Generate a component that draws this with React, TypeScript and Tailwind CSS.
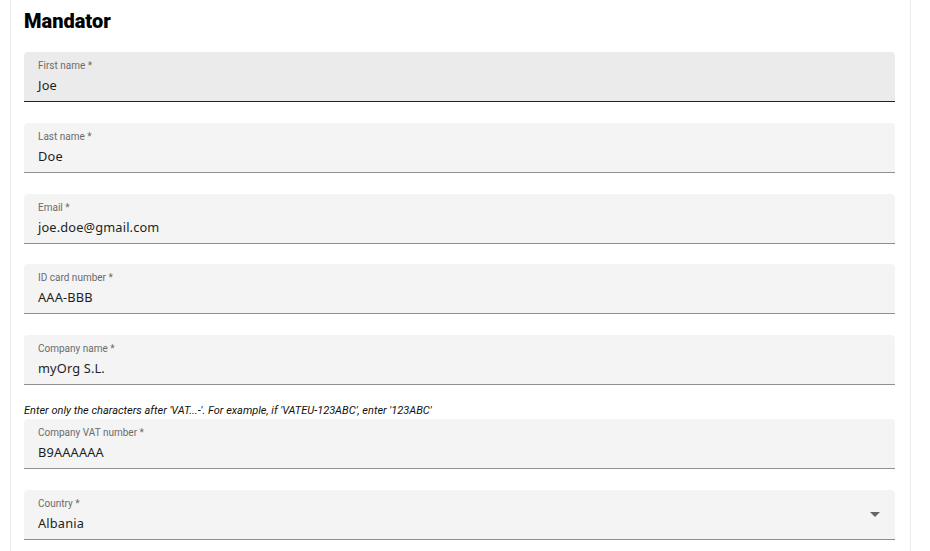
import React from "react";

type F = { label: string; value: string; active?: boolean; select?: boolean };

function Field({ label, value, active, select }: F) {
  return (
    <div
      className={`relative h-[50px] rounded-t-[4px] border-b ${
        active ? "bg-[#ebebeb] border-[#222]" : "bg-[#f4f4f4] border-[#8f8f8f]"
      }`}
    >
      <div className="pl-[14px] pt-[8px] leading-[12px] text-[10px] text-[#6b6b6b] [font-family:Roboto,sans-serif]">
        {label} *
      </div>
      <div className="pl-[14px] pt-[4px] leading-[18px] text-[12.8px] text-[#1e1e1e] [font-family:'Noto_Sans',sans-serif] tracking-[0.15px]">
        {value}
      </div>
      {select && (
        <div className="absolute right-[15px] top-[22px] w-0 h-0 border-l-[5px] border-r-[5px] border-t-[5px] border-l-transparent border-r-transparent border-t-[#666]" />
      )}
    </div>
  );
}

export default function App() {
  return (
    <div className="w-[930px] h-[551px] overflow-hidden bg-white">
      <div className="ml-[10px] w-[901px] h-[551px] border-l border-r border-[#ececec] pl-[13px] pr-[15px]">
        <h1 className="h-[52px] pt-[8px] leading-[26px] text-[20px] font-black text-black [font-family:Roboto,sans-serif]">
          Mandator
        </h1>
        <div className="flex flex-col gap-[20.75px]">
          <Field label="First name" value="Joe" active />
          <Field label="Last name" value="Doe" />
          <Field label="Email" value="joe.doe@gmail.com" />
          <Field label="ID card number" value="AAA-BBB" />
          <Field label="Company name" value="myOrg S.L." />
        </div>
        <div className="mt-[18px] h-[16px] leading-[16px] text-[11px] italic text-[#111] [font-family:Roboto,sans-serif]">
          Enter only the characters after 'VAT...-'. For example, if 'VATEU-123ABC', enter '123ABC'
        </div>
        <div className="flex flex-col gap-[20.75px]">
          <Field label="Company VAT number" value="B9AAAAAA" />
          <Field label="Country" value="Albania" select />
        </div>
      </div>
    </div>
  );
}
